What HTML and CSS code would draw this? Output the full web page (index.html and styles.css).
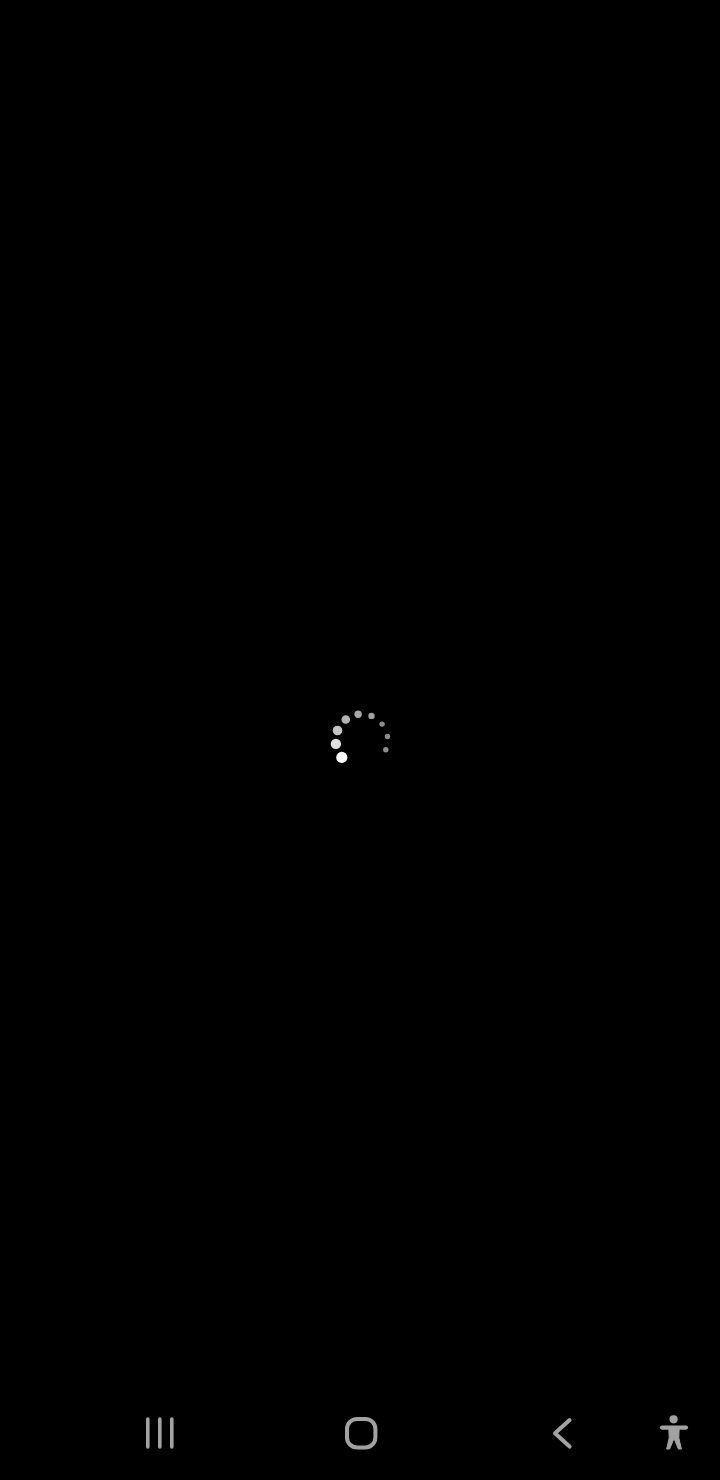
FILE: index.html
```html
<!DOCTYPE html>
<html lang="en">
<head>
<meta charset="utf-8">
<title>Loading</title>
<link rel="stylesheet" href="styles.css">
</head>
<body>
<div class="screen">
  <main class="content">
    <svg class="spinner" viewBox="328 706 64 64" width="64" height="64" aria-label="Loading">
      <circle cx="341.8" cy="757.4" r="5.6" fill="#ffffff"/>
      <circle cx="335.9" cy="743.9" r="5.2" fill="#dedede"/>
      <circle cx="337.5" cy="730.5" r="4.8" fill="#c4c4c4"/>
      <circle cx="345.8" cy="719.5" r="4.3" fill="#b4b4b4"/>
      <circle cx="358.1" cy="714.2" r="3.7" fill="#a8a8a8"/>
      <circle cx="371.5" cy="715.9" r="3.2" fill="#a0a0a0"/>
      <circle cx="382.1" cy="724.1" r="2.7" fill="#8c8c8c"/>
      <circle cx="387.5" cy="736.5" r="2.7" fill="#8c8c8c"/>
      <circle cx="385.8" cy="749.8" r="2.7" fill="#8c8c8c"/>
    </svg>
  </main>
  <nav class="navbar">
    <svg class="nav-icon" viewBox="0 0 40 40" aria-label="Recent apps">
      <path d="M7.8 6v28M19.8 6v28M31.8 6v28" fill="none" stroke="#a2a2a2" stroke-width="3.6" stroke-linecap="round"/>
    </svg>
    <svg class="nav-icon" viewBox="0 0 40 40" aria-label="Home">
      <rect x="6" y="6" width="28.4" height="28.4" rx="10" fill="none" stroke="#a2a2a2" stroke-width="4"/>
    </svg>
    <svg class="nav-icon" viewBox="0 0 40 40" aria-label="Back">
      <path d="M26.6 7 12 20.3 26.6 33.6" fill="none" stroke="#a2a2a2" stroke-width="4" stroke-linecap="round" stroke-linejoin="round"/>
    </svg>
    <svg class="nav-icon" viewBox="0 0 40 40" aria-label="Accessibility">
      <circle cx="19.6" cy="6.3" r="4.1" fill="#a2a2a2"/>
      <path d="M8 14.6h24" fill="none" stroke="#a2a2a2" stroke-width="4.2" stroke-linecap="round"/>
      <path d="M14.8 14.5h10.4l-.4 10.5 2.6 11h-3l-4.4-10.5-4.4 10.5h-3l2.6-11z" fill="#a2a2a2" stroke="#a2a2a2" stroke-linejoin="round"/>
    </svg>
  </nav>
</div>
</body>
</html>
```

FILE: styles.css
```css
html, body {
  margin: 0;
  padding: 0;
  background: #000;
}

.screen {
  display: flex;
  flex-direction: column;
  width: 720px;
  height: 1480px;
  overflow: hidden;
  background: #000;
}

.content {
  flex: 1;
  display: flex;
  align-items: center;
  justify-content: center;
  padding-top: 76px;
  min-height: 0;
}

.spinner {
  display: block;
}

.navbar {
  flex: none;
  box-sizing: border-box;
  height: 80px;
  padding: 13px 0 0 140px;
  display: grid;
  grid-template-columns: 201px 202px 111px 40px;
  align-items: start;
}

.nav-icon {
  display: block;
  width: 40px;
  height: 40px;
}
```
